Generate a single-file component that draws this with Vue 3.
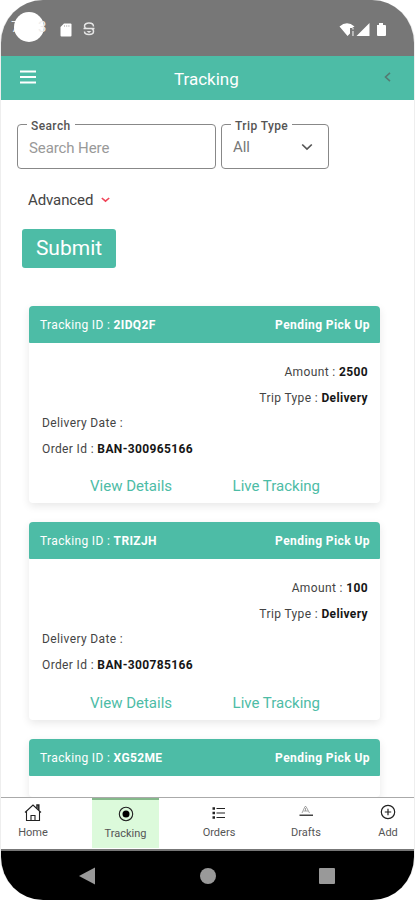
<script setup>
const orders = [
  { id: '2IDQ2F', status: 'Pending Pick Up', amount: '2500', type: 'Delivery', order: 'BAN-300965166' },
  { id: 'TRIZJH', status: 'Pending Pick Up', amount: '100', type: 'Delivery', order: 'BAN-300785166' },
]
const upcoming = { id: 'XG52ME', status: 'Pending Pick Up' }
</script>

<template>
  <div class="phone">
    <div class="status">
      <div class="clock"><span>7:</span><i></i><span>3</span></div>
      <svg class="sd" width="12" height="14" viewBox="0 0 12 14"><path d="M4 .5h6.500q1 0 1 1v11q0 1-1 1h-9q-1 0-1-1V4z" fill="#fff"/><path d="M4.500 2v2M6.700 2v2M8.900 2v2" stroke="#bbb" stroke-width=".8"/></svg>
      <svg class="sync" width="12" height="14" viewBox="0 0 12 14" fill="none" stroke="#e6e6e6" stroke-width="1.500"><path d="M10.500 4.500C10.500 0 1.500 0 1.500 4q0 2 2 2.500h5q2 .5 2 3c0 4-9 4-9 0M.5 6.500h11"/><path d="M3.500 9h5l-2.500 2z" fill="#e6e6e6" stroke="none"/></svg>
      <svg class="signals" width="48" height="16" viewBox="0 0 48 16" fill="#fff"><path d="M.5 4.500Q8-2 15.500 4.500L13 6H11v5.500L8.500 14z"/><path d="M13.200 6h1.500v1.500h-1.500zM13.200 9h1.500v5h-1.500z" opacity=".65"/><path d="M17.500 14 30.500 1v13zM38 3h2V1h4v2h2q1 0 1 1v9q0 1-1 1h-7q-1 0-1-1z"/></svg>
    </div>
    <header class="bar">
      <svg width="16" height="14" viewBox="0 0 16 14"><path d="M0 1.500h16M0 7h16M0 12.500h16" stroke="#fff" stroke-width="2"/></svg>
      <h1>Tracking</h1>
      <svg width="7" height="10" viewBox="0 0 7 10" fill="none"><path d="M6 .8 1.500 5 6 9.200" stroke="#547b72" stroke-width="1.600"/></svg>
    </header>
    <main>
      <div class="fields">
        <div class="field search"><label>Search</label><span>Search Here</span></div>
        <div class="field type"><label>Trip Type</label><span>All</span>
          <svg width="12" height="8" viewBox="0 0 12 8" fill="none"><path d="m1.200 1.500 4.800 4.500 4.800-4.500" stroke="#555" stroke-width="1.700"/></svg>
        </div>
      </div>
      <div class="advanced"><span>Advanced</span><svg width="9" height="6" viewBox="0 0 9 6" fill="none"><path d="m.8 1 3.700 3.200L8.200 1" stroke="#f04458" stroke-width="1.600"/></svg></div>
      <button class="submit">Submit</button>
      <section class="cards">
        <article v-for="o in orders" :key="o.id" class="card">
          <div class="top"><span class="tid">Tracking ID : <b>{{ o.id }}</b></span><b class="pending">{{ o.status }}</b></div>
          <div class="body">
            <p class="right">Amount : <b>{{ o.amount }}</b></p>
            <p class="right">Trip Type : <b>{{ o.type }}</b></p>
            <p>Delivery Date :</p>
            <p>Order Id : <b>{{ o.order }}</b></p>
            <div class="links"><a>View Details</a><a>Live Tracking</a></div>
          </div>
        </article>
        <article class="card partial">
          <div class="top"><span class="tid">Tracking ID : <b>{{ upcoming.id }}</b></span><b class="pending">{{ upcoming.status }}</b></div>
        </article>
      </section>
    </main>
    <nav>
      <div class="tab home"><svg width="18" height="20" viewBox="0 0 18 20" fill="none" stroke="#222" stroke-width="1.100"><path d="M1 10.500 9 3l8 7.500M2.500 9.500v9h13v-9M7 18v-4.500h4V18"/><path d="M13 6.500V3h1.800v5" stroke-width="1.500"/></svg><span>Home</span></div>
      <div class="tab tracking"><svg width="16" height="16" viewBox="0 0 16 16"><circle cx="8" cy="8" r="6.700" fill="none" stroke="#222" stroke-width="1.100"/><circle cx="8" cy="8" r="3.500" fill="#000"/></svg><span>Tracking</span></div>
      <div class="tab orders"><svg width="14" height="12" viewBox="0 0 14 12" fill="none" stroke="#222"><path d="M.5 1.500H3M.5 6H3M.5 10.500H3" stroke-width="2.400"/><path d="M4.500 1.500H13M4.500 6H13M4.500 10.500H13" stroke-width="1.200"/></svg><span>Orders</span></div>
      <div class="tab drafts"><svg width="14" height="12" viewBox="0 0 14 12" fill="none"><path d="M3 8 6 1.500h1L10.500 8M4.500 6h4.500M6.500 3v3" stroke="#999" stroke-width=".9"/><path d="M.5 10.300H14" stroke="#444" stroke-width="1.500"/></svg><span>Drafts</span></div>
      <div class="tab add"><svg width="16" height="16" viewBox="0 0 16 16" fill="none" stroke="#222" stroke-width="1.200"><circle cx="8" cy="8" r="6.700"/><path d="M8 4.800v6.400M4.800 8h6.400"/></svg><span>Add</span></div>
    </nav>
    <footer>
      <svg width="16" height="18" viewBox="0 0 16 18"><path d="M0 9 16 .5v17z" fill="#999"/></svg>
      <i class="round"></i><i class="square"></i>
    </footer>
  </div>
</template>

<style>
body { background: #fff; }
</style>
<style scoped>
* { box-sizing: border-box; }
.phone { width: 415px; height: 900px; display: flex; flex-direction: column; overflow: hidden; border-radius: 43px; background: #fff; font-family: Roboto, sans-serif; color: #444; border-left: 1px solid #eee; border-right: 1px solid #eee; }
.status { height: 56px; background: #777; display: flex; align-items: flex-start; padding: 12px 27px 0 10px; flex: none; }
.clock { width: 37px; height: 30px; display: flex; align-items: center; color: #eee; font-size: 15px; line-height: 36px; }
.clock i { width: 30px; height: 30px; border-radius: 50%; background: #fff; flex: none; margin-left: -10px; z-index: 1; }
.clock span:first-child { width: 13px; flex: none; }
.clock span:last-child { margin-left: -6px; z-index: 2; }
.sd { margin: 11px 0 0 12px; }
.sync { margin: 10px 0 0 11px; }
.signals { margin: 10px 0 0 auto; }
.bar { height: 44px; flex: none; background: #4dbca6; display: flex; align-items: center; padding: 0 23px 2px 19px; color: #fff; }
h1 { font-size: 17px; font-weight: 400; margin: 4px auto 0 138px; line-height: 22px; }
main { flex: 1; min-height: 0; overflow: hidden; }
.fields { display: flex; gap: 5px; padding: 24px 0 0 16px; }
.field { position: relative; height: 45px; border: 1px solid #888; border-radius: 4px; font-size: 15px; display: flex; align-items: center; padding: 0 11px; color: #999; letter-spacing: -.1px; }
.field label { position: absolute; left: 9px; top: -7px; background: #fff; padding: 0 4px; font-size: 12px; line-height: 16px; color: #555; font-weight: 500; letter-spacing: .4px; }
.search { width: 199px; padding-top: 2px; }
.type { width: 108px; color: #777; padding-right: 15px; justify-content: space-between; }
.advanced { display: flex; align-items: center; gap: 8px; padding: 21px 0 0 27px; font-size: 15px; line-height: 20px; letter-spacing: -.1px; }
.submit { display: block; width: 94px; height: 39px; margin: 19px 0 0 21px; padding: 0; border: 0; border-radius: 3px; background: #4dbca6; color: #fff; font: 400 21px/39px Roboto, sans-serif; }
.cards { padding: 38px 34px 0 28px; display: flex; flex-direction: column; gap: 19px; }
.card { height: 197.300px; flex: none; border-radius: 4px; box-shadow: 0 3px 9px #00000018; background: #fff; }
.partial { height: 58px; }
.top { height: 37px; padding: 1px 10px 0 11px; display: flex; align-items: center; justify-content: space-between; background: #4dbca6; color: #fff; border-radius: 4px 4px 1px 1px; font-size: 12px; letter-spacing: .35px; }
.pending { letter-spacing: .42px; }
.body { padding: 17px 12px 0 13px; font-size: 12px; }
p { margin: 0; height: 25.600px; line-height: 25.600px; letter-spacing: .37px; }
.right { text-align: right; }
b { font-weight: 700; }
.body b { color: #161616; }
.links { padding: 12px 48px 0 48px; display: flex; justify-content: space-between; font-size: 15px; line-height: 24px; color: #4dbca6; }
nav { height: 54px; flex: none; border-top: 1px solid #aaa; border-bottom: 2px solid #777; background: #fff; display: flex; font-size: 11px; color: #555; }
.tab { display: flex; flex-direction: column; align-items: center; flex: none; }
.tab span { line-height: 14px; margin-top: auto; margin-bottom: 9px; }
.home { width: 64px; padding-top: 4px; margin-right: 27px; }
.tracking { width: 67px; height: 50px; background: #dcfadb; border-top: 2px solid #85b98b; padding-top: 6px; }
.tracking span { margin-bottom: 7px; }
.orders { width: 60px; margin-left: 30px; padding-top: 9px; }
.drafts { width: 60px; margin-left: 27px; padding-top: 7px; }
.add { width: 46px; margin-left: 29px; padding-top: 6px; }
footer { height: 49px; flex: none; background: #000; display: flex; align-items: center; padding: 0 0 0 78px; }
footer i { width: 16px; height: 16px; background: #999; }
.round { border-radius: 50%; margin-left: 105px; }
.square { border-radius: 1px; margin-left: 103px; }
</style>
